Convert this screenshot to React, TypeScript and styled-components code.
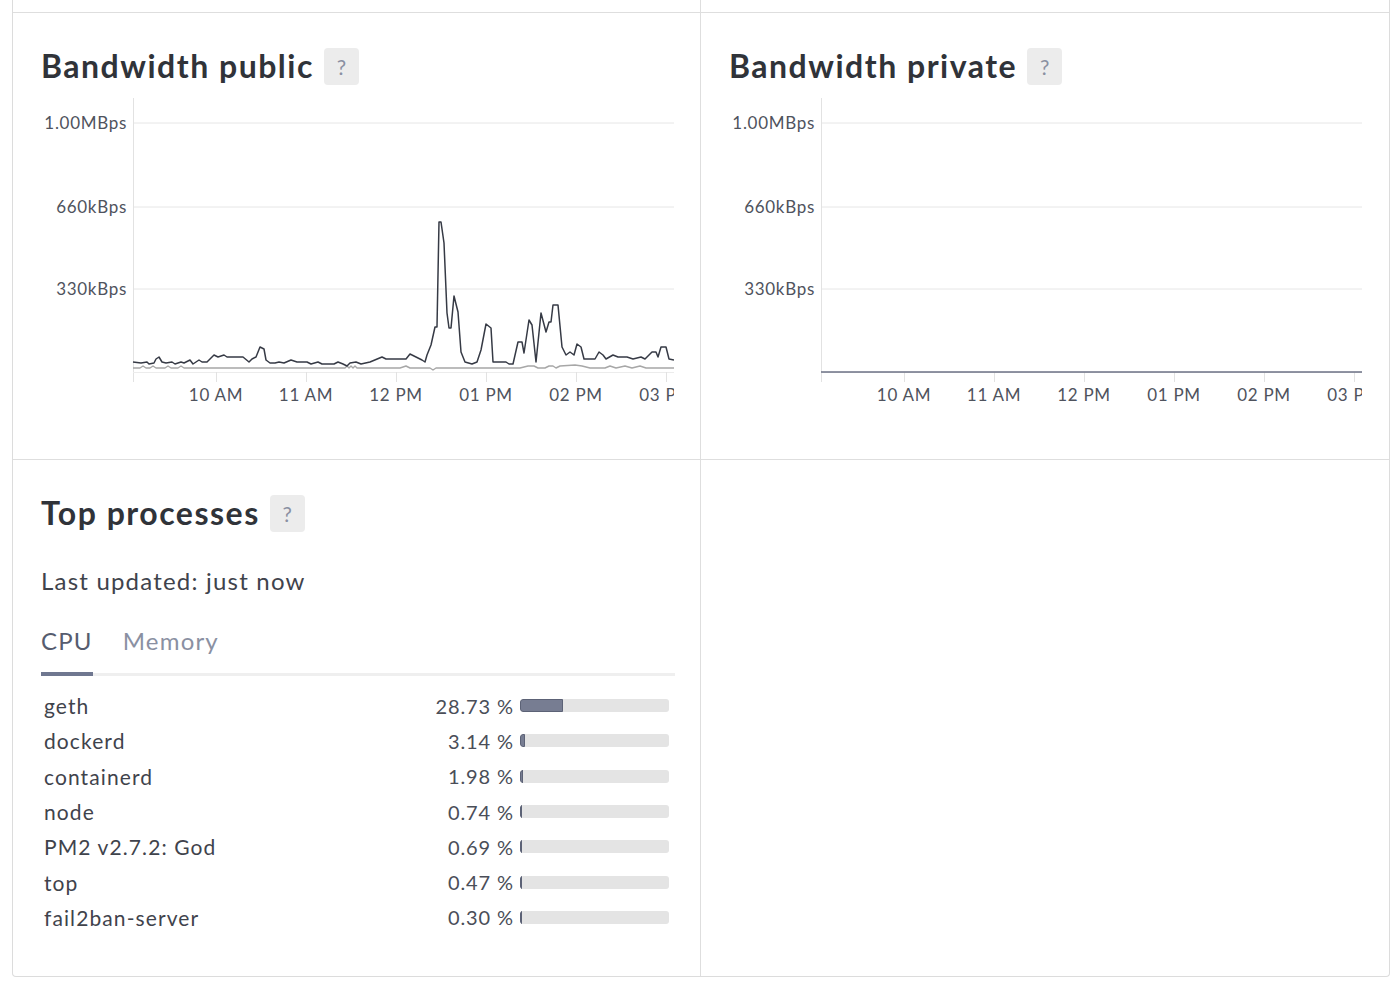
import React from "react";
import styled, { createGlobalStyle } from "styled-components";

const GlobalStyle = createGlobalStyle`
  html, body { margin: 0; padding: 0; background: #ffffff; }
  body { font-family: Lato, "Open Sans", "Liberation Sans", sans-serif; color: #3b3e46; }
  * { box-sizing: border-box; }
`;

const Page = styled.div`
  padding: 0 10px 0 12px;
`;

const Grid = styled.div`
  display: grid;
  grid-template-columns: 1fr 1fr;
  grid-template-rows: 13px 447px 516px;
  border: 1px solid #dcdcdc;
  border-top: none;
  border-radius: 0 0 4px 4px;
`;

const Cell = styled.section<{ $last?: boolean; $bottom?: boolean }>`
  border-right: ${(p) => (p.$last ? "none" : "1px solid #dedede")};
  border-bottom: ${(p) => (p.$bottom ? "none" : "1px solid #dedede")};
  padding: 33px 25px 0 28px;
  min-width: 0;
`;

const Stub = styled.div<{ $last?: boolean }>`
  border-right: ${(p) => (p.$last ? "none" : "1px solid #dedede")};
  border-bottom: 1px solid #dedede;
`;

const TitleRow = styled.div`
  display: flex;
  align-items: center;
  gap: 10px;
  height: 40px;
`;

const Title = styled.h2`
  margin: 0;
  font-size: 32px;
  line-height: 40px;
  font-weight: 700;
  color: #303339;
  letter-spacing: 1.5px;
`;

const Help = styled.span`
  display: inline-flex;
  align-items: center;
  justify-content: center;
  width: 35px;
  height: 37px;
  border-radius: 4px;
  background: #ececec;
  color: #8a90a2;
  font-size: 21px;
  font-weight: 400;
`;

const ChartBox = styled.div`
  margin-top: 9px;
  width: 633px;
  height: 320px;
  overflow: hidden;
`;

const Svg = styled.svg`
  display: block;
  overflow: hidden;
  font-family: Lato, "Open Sans", "Liberation Sans", sans-serif;
  letter-spacing: 0.7px;
`;

const Updated = styled.p`
  margin: 33px 0 0;
  font-size: 24px;
  line-height: 30px;
  color: #3f434c;
  letter-spacing: 1.2px;
`;

const Tabs = styled.div`
  display: flex;
  gap: 30px;
  margin-top: 30px;
  border-bottom: 3px solid #efefef;
`;

const Tab = styled.div<{ $active?: boolean }>`
  font-size: 24px;
  line-height: 30px;
  padding-bottom: 16px;
  letter-spacing: 1.2px;
  color: ${(p) => (p.$active ? "#565c6e" : "#8a90a2")};
  border-bottom: 4px solid ${(p) => (p.$active ? "#6f7790" : "transparent")};
  margin-bottom: -3px;
`;

const List = styled.div`
  margin-top: 12px;
  padding: 0 6px 0 3px;
  display: flex;
  flex-direction: column;
`;

const Row = styled.div`
  display: flex;
  align-items: center;
  height: 35.3px;
`;

const Name = styled.span`
  flex: 1;
  font-size: 21px;
  letter-spacing: 1.1px;
  color: #3f434c;
`;

const Pct = styled.span`
  font-size: 20px;
  letter-spacing: 0.9px;
  color: #4a4e58;
  margin-right: 6px;
`;

const Track = styled.div`
  width: 149px;
  height: 13px;
  border-radius: 3px;
  background: #e4e4e4;
  overflow: hidden;
  display: flex;
`;

const Fill = styled.div`
  height: 100%;
  background: #777d92;
  border: 1px solid #5c6276;
  border-radius: 3px 0 0 3px;
  min-width: 2px;
`;

const darkPts: [number, number][] = [
  [133, 362], [141, 363], [147, 362], [149, 364], [154, 363], [156, 359], [159, 357], [162, 362],
  [166, 363], [172, 362], [175, 364], [181, 362], [184, 363], [190, 360], [193, 364], [199, 360],
  [202, 362], [207, 362], [214, 355], [218, 357], [224, 355], [227, 357], [243, 357], [249, 362],
  [252, 359], [256, 357], [260, 347], [264, 349], [266, 360], [270, 363], [275, 363], [279, 362],
  [284, 363], [291, 360], [297, 362], [307, 362], [311, 364], [318, 362], [322, 364], [334, 364],
  [338, 362], [343, 364], [347, 366], [350, 363], [356, 362], [361, 364], [370, 362], [382, 357],
  [386, 359], [406, 359], [410, 354], [416, 357], [422, 360], [425, 362], [427, 355], [431, 345],
  [435, 327], [437, 327], [439, 222], [441, 222], [444, 243], [447, 313], [449, 328], [451, 328],
  [454, 296], [458, 312], [461, 352], [465, 362], [472, 364], [477, 362], [481, 350], [486, 324],
  [491, 328], [493, 362], [506, 362], [509, 364], [513, 364], [518, 342], [522, 342], [524, 353],
  [529, 320], [532, 325], [536, 362], [541, 313], [546, 332], [549, 322], [551, 322], [553, 305],
  [558, 305], [562, 347], [566, 355], [570, 352], [574, 355], [577, 344], [581, 347], [584, 359],
  [595, 359], [599, 352], [603, 355], [606, 359], [613, 355], [618, 357], [627, 357], [633, 359],
  [641, 357], [645, 359], [652, 352], [656, 352], [658, 357], [661, 347], [666, 347], [669, 359],
  [674, 360],
];

const grayPts: [number, number][] = [
  [133, 368], [140, 368], [143, 366], [146, 368], [150, 368], [153, 366], [156, 368], [165, 368],
  [168, 366], [171, 368], [178, 368], [181, 366], [184, 368], [190, 368], [345, 368], [347, 366],
  [349, 368], [351, 366], [353, 368], [355, 366], [357, 368], [400, 368], [406, 366], [410, 368],
  [430, 368], [433, 370], [436, 368], [520, 368], [528, 366], [534, 366], [538, 368], [545, 368],
  [549, 366], [553, 366], [556, 368], [560, 366], [575, 365], [582, 366], [590, 368], [605, 368],
  [610, 366], [616, 368], [625, 366], [632, 368], [640, 366], [646, 368], [674, 368],
];

const toPath = (pts: [number, number][]) =>
  pts.map(([x, y], i) => `${i ? "L" : "M"}${x - 41} ${y - 95}`).join(" ");

const yLabels = [
  { label: "1.00MBps", y: 28 },
  { label: "660kBps", y: 112 },
  { label: "330kBps", y: 194 },
];
const xLabels = ["10 AM", "11 AM", "12 PM", "01 PM", "02 PM", "03 PM"];

function Chart({ children }: { children?: React.ReactNode }) {
  return (
    <ChartBox>
      <Svg width={633} height={320} viewBox="0 0 633 320">
        {yLabels.map((l) => (
          <g key={l.label}>
            <line x1={92} x2={633} y1={l.y} y2={l.y} stroke="#e6e6e6" strokeWidth={1} />
            <text x={86} y={l.y + 6} textAnchor="end" fontSize={17} fill="#4f535d">
              {l.label}
            </text>
          </g>
        ))}
        <line x1={92.5} x2={92.5} y1={3} y2={287} stroke="#e2e2e2" strokeWidth={1} />
        <line x1={92} x2={633} y1={277.5} y2={277.5} stroke="#ececec" strokeWidth={1} />
        {xLabels.map((l, i) => {
          const x = 175 + i * 90;
          return (
            <g key={l}>
              <line x1={x + 0.5} x2={x + 0.5} y1={277} y2={287} stroke="#e2e2e2" strokeWidth={1} />
              <text x={x} y={306} textAnchor="middle" fontSize={17} fill="#4f535d">
                {l}
              </text>
            </g>
          );
        })}
        {children}
      </Svg>
    </ChartBox>
  );
}

const processes = [
  { name: "geth", pct: 28.73 },
  { name: "dockerd", pct: 3.14 },
  { name: "containerd", pct: 1.98 },
  { name: "node", pct: 0.74 },
  { name: "PM2 v2.7.2: God", pct: 0.69 },
  { name: "top", pct: 0.47 },
  { name: "fail2ban-server", pct: 0.3 },
];

export default function App() {
  return (
    <>
      <GlobalStyle />
      <Page>
        <Grid>
          <Stub />
          <Stub $last />
          <Cell>
            <TitleRow>
              <Title>Bandwidth public</Title>
              <Help>?</Help>
            </TitleRow>
            <Chart>
              <path d={toPath(grayPts)} fill="none" stroke="#a7a7a7" strokeWidth={1.4} strokeLinejoin="round" />
              <path d={toPath(darkPts)} fill="none" stroke="#363a45" strokeWidth={1.5} strokeLinejoin="round" />
            </Chart>
          </Cell>
          <Cell $last>
            <TitleRow>
              <Title>Bandwidth private</Title>
              <Help>?</Help>
            </TitleRow>
            <Chart>
              <line x1={92} x2={633} y1={277} y2={277} stroke="#6b7185" strokeWidth={1.5} />
            </Chart>
          </Cell>
          <Cell $bottom>
            <TitleRow>
              <Title>Top processes</Title>
              <Help>?</Help>
            </TitleRow>
            <Updated>Last updated: just now</Updated>
            <Tabs>
              <Tab $active>CPU</Tab>
              <Tab>Memory</Tab>
            </Tabs>
            <List>
              {processes.map((p) => (
                <Row key={p.name}>
                  <Name>{p.name}</Name>
                  <Pct>{p.pct.toFixed(2)} %</Pct>
                  <Track>
                    <Fill style={{ width: `${p.pct}%` }} />
                  </Track>
                </Row>
              ))}
            </List>
          </Cell>
          <Cell $last $bottom />
        </Grid>
      </Page>
    </>
  );
}
